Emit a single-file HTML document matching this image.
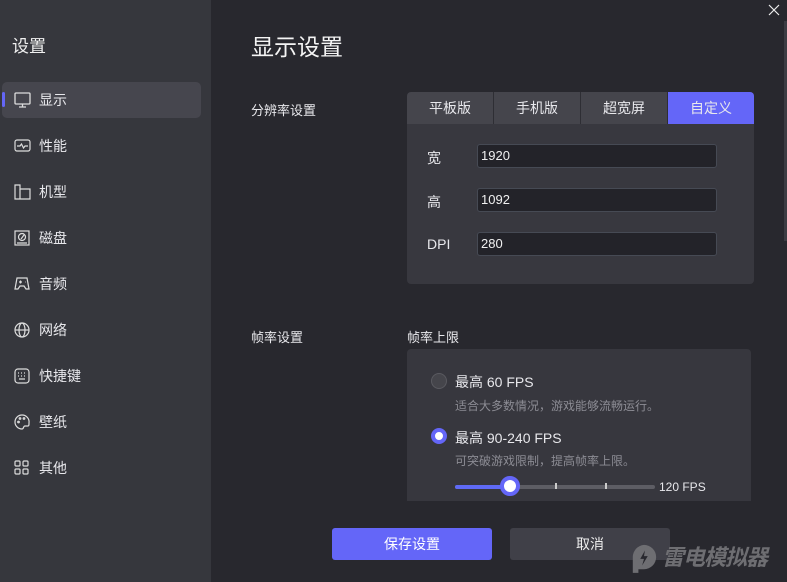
<!DOCTYPE html>
<html><head><meta charset="utf-8"><style>
*{margin:0;padding:0;box-sizing:border-box}
html,body{width:787px;height:582px;overflow:hidden}
body{background:#28282e;font-family:"Liberation Sans","Noto Sans CJK SC",sans-serif;color:#e8e8ec;position:relative}
.side{position:absolute;left:0;top:0;width:211px;height:582px;background:#36373d}
.side h1{position:absolute;left:12px;top:32px;font-size:17px;font-weight:normal;color:#f0f0f0}
.item{position:absolute;left:2px;width:199px;height:36px;font-size:14px;display:flex;align-items:center}
.item svg{position:absolute;left:12px;top:10px}
.item span{position:absolute;left:37px}
.item.act{background:#46464e;border-radius:5px}
.item.act:before{content:"";position:absolute;left:0;top:10px;width:3px;height:15px;background:#6466f6;border-radius:2px}
.abs{position:absolute}
.title{left:251px;top:28px;font-size:23px;color:#f4f4f4}
.lbl{font-size:13px;color:#e8e8ec}
.tabs{left:407px;top:92px;width:347px;height:32px;display:flex;background:#45454c;border-radius:4px 4px 0 0;overflow:hidden}
.tabs div{flex:1;text-align:center;line-height:32px;font-size:14px;border-right:1px solid #2e2e34}
.tabs div:last-child{border:none;background:#6466f8}
.panel{background:#38383f;border-radius:0 0 4px 4px}
.inp{position:absolute;left:70px;width:240px;height:24px;background:#232329;border:1px solid #464a54;border-radius:3px;font-size:13px;line-height:22px;padding-left:3px;color:#f0f0f0}
.fl{position:absolute;left:20px;font-size:14px}
.radio{position:absolute;width:16px;height:16px;border-radius:50%}
.btn{position:absolute;top:528px;height:32px;border-radius:3px;text-align:center;line-height:32px;font-size:14px}
</style></head><body>
<div class="side">
<h1>设置</h1>
<div class="item act" style="top:82px"><svg width="18" height="16" viewBox="0 0 18 16" fill="none" stroke="#ddd" stroke-width="1.3"><rect x="1" y="1" width="15" height="11" rx="1"/><path d="M5 15h7M8.5 12v3"/></svg><span>显示</span></div>
<div class="item" style="top:128px"><svg width="18" height="16" viewBox="0 0 18 16" fill="none" stroke="#ddd" stroke-width="1.2"><rect x="1" y="2" width="15" height="11" rx="2"/><path d="M3 8h3l1.5-2 2 4 1.5-2h3"/></svg><span>性能</span></div>
<div class="item" style="top:174px"><svg width="18" height="16" viewBox="0 0 18 16" fill="none" stroke="#ddd" stroke-width="1.2"><path d="M1 1h5v4h10v10H1z"/><path d="M6 5v10"/></svg><span>机型</span></div>
<div class="item" style="top:220px"><svg width="18" height="16" viewBox="0 0 18 16" fill="none" stroke="#ddd" stroke-width="1.2"><rect x="1" y="1" width="14" height="14"/><circle cx="8" cy="7" r="3.5"/><path d="M7 9l3-4M3 13h10"/></svg><span>磁盘</span></div>
<div class="item" style="top:266px"><svg width="18" height="16" viewBox="0 0 18 16" fill="none" stroke="#ddd" stroke-width="1.2"><path d="M3 2h10l2 11-3 0-2-3H6l-2 3H1z"/><path d="M5 6h3M6.5 4.5v3M11 6h.5"/></svg><span>音频</span></div>
<div class="item" style="top:312px"><svg width="18" height="16" viewBox="0 0 18 16" fill="none" stroke="#ddd" stroke-width="1.2"><circle cx="8" cy="8" r="7"/><ellipse cx="8" cy="8" rx="3" ry="7"/><path d="M1 8h14"/></svg><span>网络</span></div>
<div class="item" style="top:358px"><svg width="18" height="16" viewBox="0 0 18 16" fill="none" stroke="#ddd" stroke-width="1.2"><rect x="1" y="1" width="14" height="14" rx="3"/><path d="M4 5h1M7 5h1M10 5h1M4 8h1M7 8h1M10 8h1M5 11h6"/></svg><span>快捷键</span></div>
<div class="item" style="top:404px"><svg width="18" height="16" viewBox="0 0 18 16" fill="none" stroke="#ddd" stroke-width="1.2"><path d="M8 1a7 7 0 1 0 0 14c2 0 1-3 3-3h3c1 0 1-1 1-3A7 7 0 0 0 8 1z"/><circle cx="4.5" cy="8" r=".8"/><circle cx="6" cy="4.5" r=".8"/><circle cx="10" cy="4.5" r=".8"/></svg><span>壁纸</span></div>
<div class="item" style="top:450px"><svg width="18" height="16" viewBox="0 0 18 16" fill="none" stroke="#ddd" stroke-width="1.2"><rect x="1" y="1" width="5" height="5" rx="1"/><rect x="9" y="1" width="5" height="5" rx="1"/><rect x="1" y="9" width="5" height="5" rx="1"/><rect x="9" y="9" width="5" height="5" rx="1"/></svg><span>其他</span></div>
</div>
<svg class="abs" style="left:767px;top:3px" width="14" height="14" viewBox="0 0 14 14" stroke="#eee" stroke-width="1.2"><path d="M2 2l10 10M12 2L2 12"/></svg>
<div class="abs" style="left:784px;top:21px;width:3px;height:220px;background:#3c3c43"></div>
<div class="abs title">显示设置</div>
<div class="abs lbl" style="left:251px;top:100px">分辨率设置</div>
<div class="abs tabs"><div>平板版</div><div>手机版</div><div>超宽屏</div><div>自定义</div></div>
<div class="abs panel" style="left:407px;top:124px;width:347px;height:160px">
<div class="fl" style="top:24px">宽</div><div class="inp" style="top:20px">1920</div>
<div class="fl" style="top:68px">高</div><div class="inp" style="top:64px">1092</div>
<div class="fl" style="top:112px">DPI</div><div class="inp" style="top:108px">280</div>
</div>
<div class="abs lbl" style="left:251px;top:327px">帧率设置</div>
<div class="abs lbl" style="left:407px;top:327px">帧率上限</div>
<div class="abs" style="left:407px;top:349px;width:344px;height:152px;background:#37373e;border-radius:4px 4px 0 0">
<div class="radio" style="left:24px;top:24px;background:#45454b;border:1px solid #5a5a60"></div>
<div class="abs" style="left:48px;top:23px;font-size:14px">最高 60 FPS</div>
<div class="abs" style="left:48px;top:48px;font-size:12px;color:#8c8c94">适合大多数情况，游戏能够流畅运行。</div>
<div class="radio" style="left:24px;top:79px;background:#fff;border:4px solid #6466f8"></div>
<div class="abs" style="left:48px;top:79px;font-size:14px">最高 90-240 FPS</div>
<div class="abs" style="left:48px;top:103px;font-size:12px;color:#8c8c94">可突破游戏限制，提高帧率上限。</div>
<div class="abs" style="left:48px;top:136px;width:200px;height:4px;background:#5d5d64;border-radius:2px"></div>
<div class="abs" style="left:48px;top:136px;width:55px;height:4px;background:#5f6af5;border-radius:2px"></div>
<div class="abs" style="left:148px;top:134px;width:2px;height:6px;background:#ccc"></div>
<div class="abs" style="left:198px;top:134px;width:2px;height:6px;background:#ccc"></div>
<div class="abs" style="left:93px;top:127px;width:20px;height:20px;border-radius:50%;background:#fff;border:4px solid #6466f8"></div>
<div class="abs" style="left:252px;top:131px;font-size:12px">120 FPS</div>
</div>
<div class="btn" style="left:332px;width:160px;background:#6466f8;color:#fff">保存设置</div>
<div class="btn" style="left:510px;width:160px;background:#404048;color:#eee">取消</div>
<svg class="abs" style="left:630px;top:543px" width="28" height="30" viewBox="0 0 30 32"><path d="M15 2a13 13 0 0 1 0 26H9v4H3V15A13 13 0 0 1 15 2z" fill="#6e6e72"/><path d="M16 8l-5 9h4l-2 7 6-10h-4z" fill="#28282e"/></svg>
<div class="abs" style="left:662px;top:545px;font-size:22px;line-height:26px;white-space:nowrap;font-weight:bold;font-style:italic;color:#6e6e72;letter-spacing:-1px">雷电模拟器</div>
</body></html>
